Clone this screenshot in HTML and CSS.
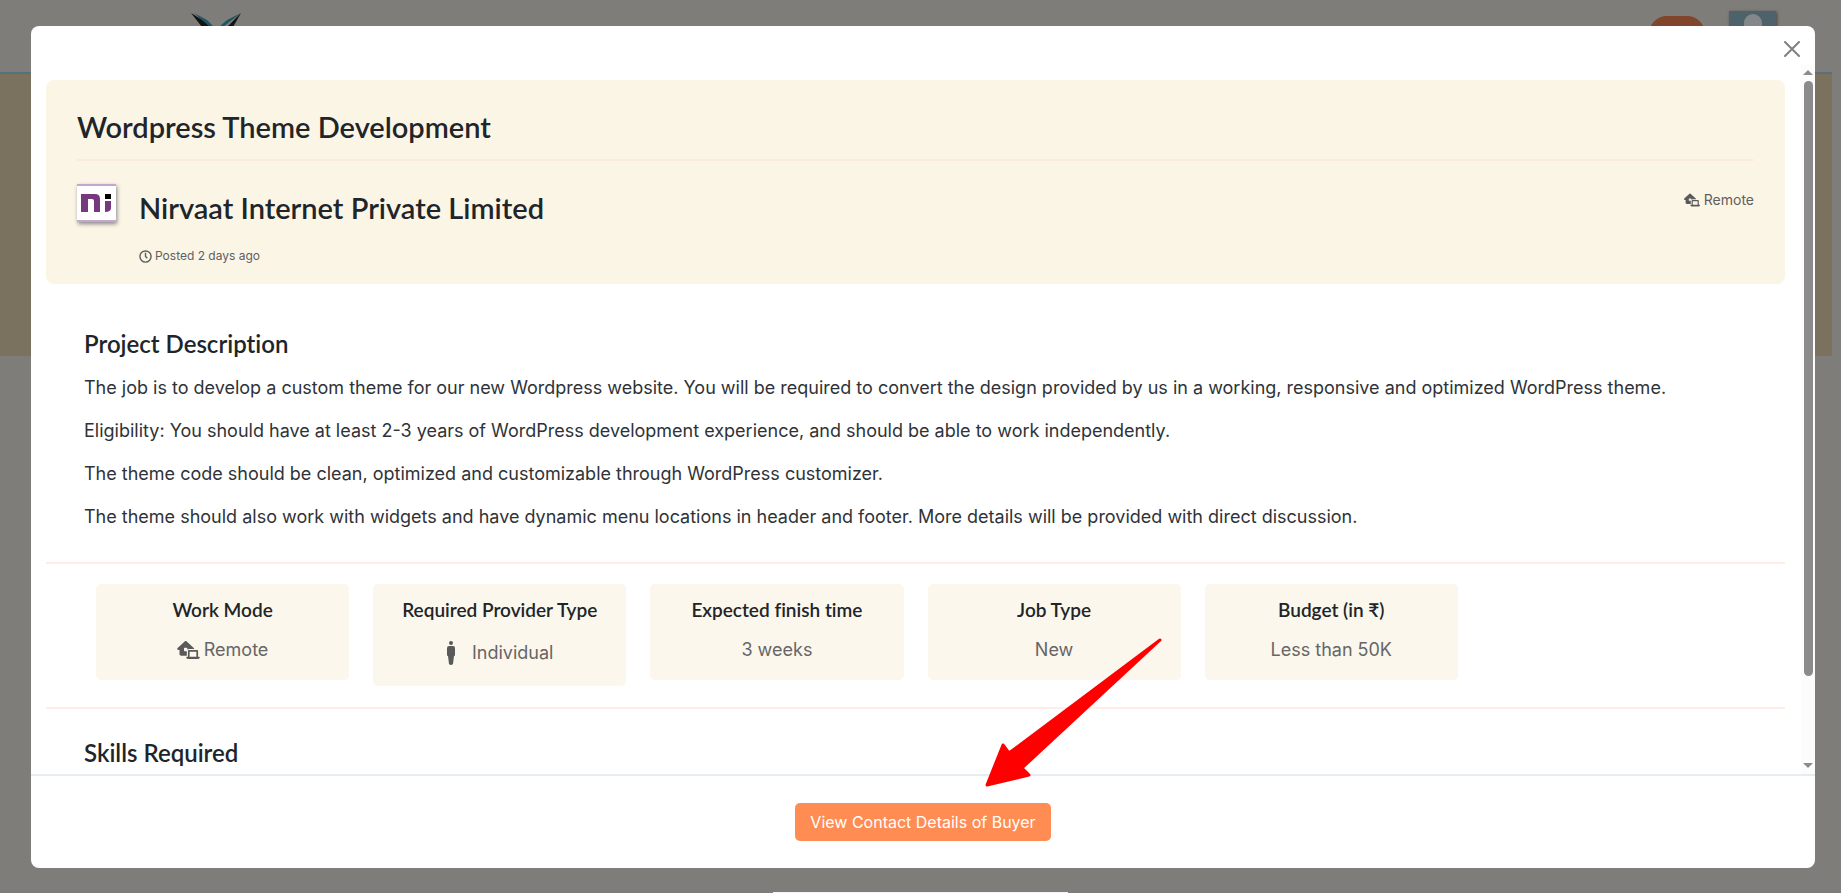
FILE: index.html
```html
<!DOCTYPE html>
<html lang="en">
<head>
    <meta charset="utf-8">
    <title>Wordpress Theme Development</title>
    <link rel="stylesheet" href="styles.css">
</head>
<body>
    <svg class="symbols" aria-hidden="true">
        <symbol id="house-laptop" viewBox="0 0 640 512">
            <path d="M218.300 8.500c12.300-11.300 31.200-11.300 43.400 0l208 192c6.700 6.200 10.300 14.800 10.300 23.500H336c-19.100 0-36.300 8.400-48 21.700V208c0-8.800-7.200-16-16-16H208c-8.800 0-16 7.200-16 16v64c0 8.800 7.200 16 16 16h64V416H112c-26.500 0-48-21.500-48-48V256H32c-13.200 0-25-8.100-29.800-20.300s-1.600-26.200 8.100-35.200zM352 304V448H544V304zM304 288c0-17.700 14.300-32 32-32H560c17.700 0 32 14.300 32 32V448h32c8.800 0 16 7.200 16 16c0 26.500-21.500 48-48 48H304c-26.500 0-48-21.500-48-48c0-8.800 7.200-16 16-16h32z"/>
        </symbol>
    </svg>

    <div class="page">
        <header class="topbar">
            <svg class="brand" viewBox="0 0 52 26" aria-hidden="true">
                <path d="M0 0L13 8L22 14H11z" fill="#101414"/>
                <path d="M3 0L16 7L23 14H19z" fill="#1f5561"/>
                <path d="M50 0L36 7L28 14H32z" fill="#1f5561"/>
                <path d="M50 0L42 14H36z" fill="#101414"/>
            </svg>
            <div class="account">
                <span class="pill"></span>
                <span class="avatar"><span class="head"></span></span>
            </div>
        </header>
        <div class="hero"></div>
    </div>

    <div class="overlay">
        <div class="modal" role="dialog" aria-labelledby="jobTitle">
            <div class="modal-header">
                <button type="button" class="close" aria-label="Close">
                    <svg viewBox="0 0 16 16"><path d="M1 1L15 15M15 1L1 15"/></svg>
                </button>
            </div>

            <div class="modal-main">
                <div class="modal-body">
                    <section class="job-card">
                        <h2 id="jobTitle">Wordpress Theme Development</h2>
                        <div class="company">
                            <svg class="logo" viewBox="0 0 39 38" role="img" aria-label="Nirvaat">
                                <path d="M0 0H39V38H0z" fill="#fff"/>
                                <path d="M0 0H39V2H0zM0 36H39V38H0z" fill="#c4a6d0"/>
                                <path d="M4 10H18Q23 10 23 15V28H17V17Q17 15 15 15H11V28H4z" fill="#74397f"/>
                                <path d="M28 17H34V24Q34 28 28 28z" fill="#74397f"/>
                                <path d="M28 10H34V15H28z" fill="#000"/>
                            </svg>
                            <div class="company-info">
                                <h2>Nirvaat Internet Private Limited</h2>
                                <p class="posted">
                                    <svg class="clock" viewBox="0 0 14 14"><circle cx="7" cy="7" r="6"/><path d="M7 3V7L9 9"/></svg>
                                    Posted 2 days ago
                                </p>
                            </div>
                            <p class="mode"><svg class="icon"><use href="#house-laptop"/></svg> Remote</p>
                        </div>
                    </section>

                    <section class="description">
                        <h3>Project Description</h3>
                        <p>The job is to develop a custom theme for our new Wordpress website. You will be required to convert the design provided by us in a working, responsive and optimized WordPress theme.</p>
                        <p>Eligibility: You should have at least 2-3 years of WordPress development experience, and should be able to work independently.</p>
                        <p>The theme code should be clean, optimized and customizable through WordPress customizer.</p>
                        <p>The theme should also work with widgets and have dynamic menu locations in header and footer. More details will be provided with direct discussion.</p>
                    </section>

                    <section class="tiles">
                        <div class="tile">
                            <h4>Work Mode</h4>
                            <p><svg class="icon"><use href="#house-laptop"/></svg> Remote</p>
                        </div>
                        <div class="tile">
                            <h4>Required Provider Type</h4>
                            <p class="provider">
                                <svg class="person" viewBox="0 0 10 26"><circle cx="5" cy="3" r="2"/><path d="M3 6H7Q9 6 9 8V15Q9 16 8 16L7 24Q5 26 3 24L2 16Q1 16 1 15V8Q1 6 3 6z"/></svg>
                                Individual
                            </p>
                        </div>
                        <div class="tile">
                            <h4>Expected finish time</h4>
                            <p>3 weeks</p>
                        </div>
                        <div class="tile">
                            <h4>Job Type</h4>
                            <p>New</p>
                        </div>
                        <div class="tile">
                            <h4>Budget (in ₹)</h4>
                            <p>Less than 50K</p>
                        </div>
                    </section>

                    <section class="skills">
                        <h3>Skills Required</h3>
                    </section>
                </div>
                <div class="scrollbar" aria-hidden="true">
                    <span class="arrow-up"></span>
                    <div class="track"><div class="thumb"></div></div>
                    <span class="arrow-down"></span>
                </div>
            </div>

            <div class="modal-footer">
                <button type="button" class="btn">View Contact Details of Buyer</button>
                <svg class="pointer" viewBox="0 0 178 150" aria-hidden="true">
                    <path d="M2 147L18 107L24 115L175 2L37 130L44 137z"/>
                </svg>
            </div>
        </div>
    </div>
    <div class="bottom-strip"></div>
</body>
</html>
```

FILE: styles.css
```css
* {
    box-sizing: border-box;
}

body {
    margin: 0;
    height: 100vh;
    overflow: hidden;
    background-color: #7f7d7a;
    color: #212529;
    font-family: Inter, sans-serif;
}

h2, h3, h4, p {
    margin: 0;
}

h2, h3, h4 {
    font-family: Lato, sans-serif;
    font-weight: 600;
    font-variant-ligatures: none;
}

.symbols {
    display: none;
}

/* page behind the modal */
.page {
    margin-right: 9px;
}

.topbar {
    display: flex;
    justify-content: space-between;
    align-items: flex-start;
    height: 74px;
    padding: 11px 56px 0 191px;
    border-bottom: 2px solid #56717b;
}

.brand {
    width: 52px;
    margin-top: 2px;
}

.account {
    display: flex;
    gap: 24px;
}

.pill {
    width: 56px;
    height: 36px;
    margin-top: 5px;
    border-radius: 18px;
    background-color: #80452a;
}

.avatar {
    width: 47px;
    height: 48px;
    padding-top: 3px;
    background-color: #4d626b;
    box-shadow: 1px 1px 3px #444;
}

.head {
    display: block;
    width: 18px;
    height: 24px;
    margin: 0 auto;
    border-radius: 9px;
    background-color: #85888a;
}

.hero {
    height: 282px;
    background-color: #7a725f;
}

/* modal */
.overlay {
    position: absolute;
    inset: 0;
    padding: 26px 26px 25px 31px;
}

.modal {
    display: flex;
    flex-direction: column;
    height: 100%;
    border-radius: 8px;
    background-color: #fff;
}

.modal-header {
    display: flex;
    flex: 0 0 38px;
    justify-content: flex-end;
    align-items: center;
    padding: 8px 15px 0 0;
}

.close {
    width: 16px;
    height: 16px;
    padding: 0;
    border: 0;
    background: none;
    cursor: pointer;
}

.close svg {
    display: block;
    stroke: #808080;
    stroke-width: 2;
    stroke-linecap: round;
}

.modal-main {
    display: flex;
    flex: 1;
    min-height: 0;
}

.modal-body {
    flex: 1;
    overflow: hidden;
    padding: 16px 16px 0 15px;
}

.job-card {
    padding: 23px 31px 18px;
    border-radius: 8px;
    background-color: #fbf5e6;
}

.job-card h2 {
    font-size: 29px;
    line-height: 48px;
}

.company {
    display: flex;
    align-items: flex-start;
    gap: 23px;
    margin-top: 8px;
    padding-top: 23px;
    border-top: 2px solid #fbecdd;
}

.logo {
    width: 39px;
    box-shadow: 1px 2px 4px #888;
}

.company-info {
    flex: 1;
}

.posted {
    display: flex;
    align-items: center;
    gap: 3px;
    margin-top: 14px;
    font-size: 12px;
    line-height: 20px;
    color: #5f5f5f;
}

.clock {
    width: 13px;
    fill: none;
    stroke: #5f5f5f;
    stroke-width: 1.5;
}

.mode {
    display: flex;
    align-items: center;
    gap: 4px;
    margin-top: 6px;
    font-size: 14px;
    line-height: 20px;
    color: #5f5f5f;
}

.icon {
    width: 16px;
    height: 14px;
    fill: #5a5a5a;
}

.description {
    padding: 40px 38px 32px;
    border-bottom: 2px solid #ffeee8;
}

h3 {
    font-size: 24px;
    line-height: 40px;
}

.description p {
    margin-top: 16px;
    font-size: 18px;
    line-height: 27px;
    color: #2f3338;
}

.description h3 + p {
    margin-top: 10px;
}

.tiles {
    display: grid;
    grid-template-columns: repeat(6, 1fr);
    align-items: start;
    gap: 24px;
    padding: 20px 50px 21px;
    border-bottom: 2px solid #ffeee8;
}

.tile {
    padding: 12px 8px 16px;
    border-radius: 5px;
    background-color: #fbf7ec;
    text-align: center;
}

.tile h4 {
    font-size: 19px;
    line-height: 28px;
}

.tile p {
    display: flex;
    justify-content: center;
    align-items: center;
    gap: 4px;
    margin-top: 12px;
    font-size: 18px;
    line-height: 28px;
    color: #666;
}

.tile .icon {
    width: 23px;
    height: 18px;
}

.tile .provider {
    gap: 16px;
    line-height: 34px;
}

.person {
    width: 10px;
    height: 26px;
    fill: #5a5a5a;
}

.skills {
    padding: 24px 38px;
}

.scrollbar {
    display: flex;
    flex-direction: column;
    align-items: center;
    flex: 0 0 14px;
    padding: 6px 0;
    background-color: #fcfcfc;
}

.arrow-up, .arrow-down {
    border: 5px solid transparent;
}

.arrow-up {
    border-top: 0;
    border-bottom-color: #8b8b8b;
}

.arrow-down {
    border-bottom: 0;
    border-top-color: #8b8b8b;
}

.track {
    flex: 1;
    width: 9px;
    margin: 6px 0;
}

.thumb {
    height: 88%;
    border-radius: 5px;
    background-color: #8b8b8b;
}

.modal-footer {
    position: relative;
    display: flex;
    flex: 0 0 94px;
    justify-content: center;
    align-items: center;
    border-top: 2px solid #e7ecf0;
}

.btn {
    height: 38px;
    padding: 0 15px;
    border: 0;
    border-radius: 5px;
    background-color: #ff8c52;
    color: #fff;
    font-family: Inter, sans-serif;
    font-size: 16px;
    cursor: pointer;
}

/* red arrow laid over the tiles, pointing at the button */
.pointer {
    position: absolute;
    top: -138px;
    left: calc(50% + 62px);
    width: 178px;
    height: 150px;
    fill: #f00;
    stroke: #f00;
    stroke-width: 3;
    stroke-linejoin: round;
}

.bottom-strip {
    position: absolute;
    bottom: 0;
    left: 42%;
    width: 16%;
    height: 1px;
    background-color: #f4f4f4;
}
```
